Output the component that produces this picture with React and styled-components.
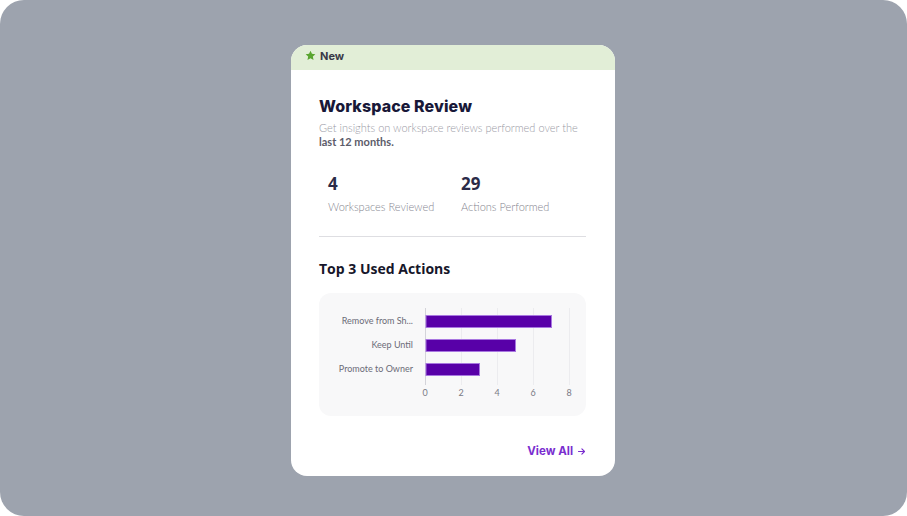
import React from "react";
import styled, { createGlobalStyle } from "styled-components";

const GlobalStyle = createGlobalStyle`
  html, body {
    margin: 0;
    padding: 0;
    background: #ffffff;
  }
  body {
    font-family: "Lato", "Noto Sans", sans-serif;
  }
`;

const Frame = styled.div`
  width: 907px;
  height: 516px;
  box-sizing: border-box;
  padding: 45px 0 0 291px;
  background: #9da3ae;
  border-radius: 24px;
  display: flex;
  align-items: flex-start;
`;

const Card = styled.div`
  width: 324px;
  height: 431px;
  background: #ffffff;
  border-radius: 16px;
  overflow: hidden;
  display: flex;
  flex-direction: column;
`;

const Banner = styled.div`
  height: 25px;
  box-sizing: border-box;
  padding: 4px 0 0 14px;
  background: #e2eed7;
  display: flex;
  align-items: flex-start;
  gap: 4px;
  font-family: "Inter", sans-serif;
  font-size: 11px;
  font-weight: 700;
  line-height: 14px;
  color: #3a3a48;

  svg {
    margin-top: 1px;
  }
`;

const Body = styled.div`
  flex: 1;
  padding: 26px 29px 0 28px;
  display: flex;
  flex-direction: column;
`;

const Title = styled.h1`
  margin: 0;
  font-family: "Inter", sans-serif;
  font-size: 16px;
  font-weight: 800;
  letter-spacing: 0.1px;
  color: #181838;
  line-height: 20px;
`;

const Desc = styled.p`
  margin: 5px 0 0;
  font-size: 11px;
  font-weight: 300;
  line-height: 14px;
  color: #9b9ba6;

  b {
    font-weight: 700;
    color: #5c5c6a;
  }
`;

const Stats = styled.div`
  display: flex;
  padding: 25px 0 0 9px;
`;

const Stat = styled.div`
  width: ${(p) => p.$w}px;
  display: flex;
  flex-direction: column;
`;

const StatValue = styled.div`
  font-family: "Open Sans", sans-serif;
  font-size: 17px;
  font-weight: 700;
  color: #2b2b48;
  line-height: 20px;
`;

const StatLabel = styled.div`
  margin-top: 6px;
  font-size: 11px;
  font-weight: 300;
  color: #85858f;
  line-height: 14px;
`;

const Divider = styled.hr`
  margin: 22px 0 0;
  border: none;
  border-top: 1px solid #dedee2;
`;

const SectionTitle = styled.h2`
  margin: 23px 0 0;
  font-family: "Open Sans", sans-serif;
  font-size: 14px;
  font-weight: 700;
  color: #16162a;
  line-height: 18px;
`;

const ChartPanel = styled.div`
  margin-top: 15px;
  height: 123px;
  background: #f8f8f9;
  border-radius: 12px;
`;

const Footer = styled.div`
  display: flex;
  justify-content: flex-end;
  padding-top: 28px;
`;

const ViewAll = styled.a`
  display: flex;
  align-items: center;
  gap: 4px;
  font-family: "Inter", sans-serif;
  font-size: 11.5px;
  font-weight: 700;
  color: #7a2ecf;
  text-decoration: none;
  cursor: pointer;
`;

const Star = () => (
  <svg width="11" height="11" viewBox="0 0 24 24">
    <path
      d="M12 1.5l3.2 6.9 7.4.8-5.5 5.1 1.5 7.4L12 18l-6.6 3.7 1.5-7.4L1.4 9.2l7.4-.8z"
      fill="#5aa530"
    />
  </svg>
);

const actions = [
  { label: "Remove from Sh...", value: 7 },
  { label: "Keep Until", value: 5 },
  { label: "Promote to Owner", value: 3 },
];

const Chart = () => {
  const x0 = 106;
  const unit = 18;
  const ticks = [0, 2, 4, 6, 8];
  return (
    <svg width="266" height="123" viewBox="0 0 266 123">
      {ticks.map((t) => (
        <line
          key={t}
          x1={x0 + t * unit + 0.5}
          x2={x0 + t * unit + 0.5}
          y1={15}
          y2={92}
          stroke={t === 0 ? "#d4d4da" : "#ececef"}
          strokeWidth="1"
        />
      ))}
      {actions.map((a, i) => (
        <g key={a.label}>
          <rect
            x={x0 + 1}
            y={22.5 + i * 24}
            width={a.value * unit - 0.5}
            height={12}
            fill="#5800a8"
            stroke="#a877e0"
            strokeWidth="1"
          />
          <text
            x={94}
            y={29 + i * 24}
            textAnchor="end"
            dominantBaseline="middle"
            fontFamily="Lato, sans-serif"
            fontSize="9"
            fill="#6b6b78"
          >
            {a.label}
          </text>
        </g>
      ))}
      {ticks.map((t) => (
        <text
          key={t}
          x={x0 + t * unit}
          y={101}
          textAnchor="middle"
          dominantBaseline="middle"
          fontFamily="Lato, sans-serif"
          fontSize="9"
          fill="#7a7a86"
        >
          {t}
        </text>
      ))}
    </svg>
  );
};

export default function App() {
  return (
    <>
      <GlobalStyle />
      <Frame>
        <Card>
          <Banner>
            <Star />
            New
          </Banner>
          <Body>
            <Title>Workspace Review</Title>
            <Desc>
              Get insights on workspace reviews performed over the
              <br />
              <b>last 12 months.</b>
            </Desc>
            <Stats>
              <Stat $w={133}>
                <StatValue>4</StatValue>
                <StatLabel>Workspaces Reviewed</StatLabel>
              </Stat>
              <Stat $w={120}>
                <StatValue>29</StatValue>
                <StatLabel>Actions Performed</StatLabel>
              </Stat>
            </Stats>
            <Divider />
            <SectionTitle>Top 3 Used Actions</SectionTitle>
            <ChartPanel>
              <Chart />
            </ChartPanel>
            <Footer>
              <ViewAll>
                View All
                <svg width="9" height="9" viewBox="0 0 24 24" fill="none" stroke="#7a2ecf" strokeWidth="3" strokeLinecap="round" strokeLinejoin="round">
                  <path d="M4 12h16M13 5l7 7-7 7" />
                </svg>
              </ViewAll>
            </Footer>
          </Body>
        </Card>
      </Frame>
    </>
  );
}
